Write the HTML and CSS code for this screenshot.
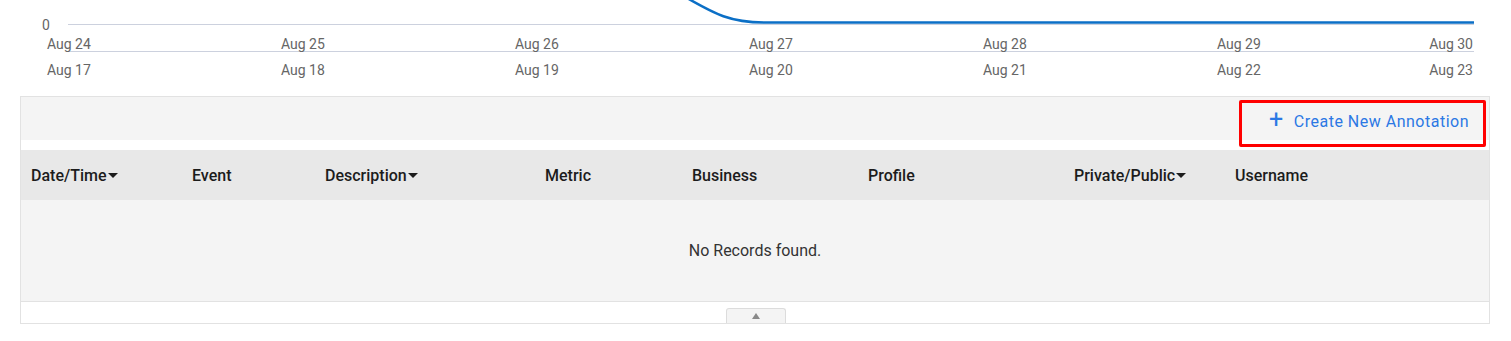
FILE: index.html
```html
<!DOCTYPE html>
<html>
<head>
<meta charset="utf-8">
<link rel="stylesheet" href="styles.css">
</head>
<body>
<div class="chart">
  <svg class="plot" width="1511" height="37" viewBox="0 0 1511 37">
    <text x="42" y="30" class="ylabel">0</text>
    <line x1="68" y1="24.5" x2="1474" y2="24.5" stroke="#ccd1de" stroke-width="1"/>
    <path d="M687 -2 C 715 14, 730 22.5, 765 22.5 L 1474 22.5" fill="none" stroke="#0b6fc6" stroke-width="2.5"/>
  </svg>
  <div class="axis axis-top">
    <span class="tick">Aug 24</span><span class="tick">Aug 25</span><span class="tick">Aug 26</span><span class="tick">Aug 27</span><span class="tick">Aug 28</span><span class="tick grow">Aug 29</span><span class="tick last">Aug 30</span>
  </div>
  <div class="axis-line"></div>
  <div class="axis axis-bottom">
    <span class="tick">Aug 17</span><span class="tick">Aug 18</span><span class="tick">Aug 19</span><span class="tick">Aug 20</span><span class="tick">Aug 21</span><span class="tick grow">Aug 22</span><span class="tick last">Aug 23</span>
  </div>
</div>

<div class="panel">
  <div class="toolbar">
    <button class="create-btn"><span class="plus">+</span>Create New Annotation</button>
  </div>
  <div class="spacer"></div>
  <div class="thead">
    <div class="th">Date/Time<span class="caret"></span></div>
    <div class="th">Event</div>
    <div class="th">Description<span class="caret"></span></div>
    <div class="th">Metric</div>
    <div class="th">Business</div>
    <div class="th">Profile</div>
    <div class="th">Private/Public<span class="caret"></span></div>
    <div class="th">Username</div>
  </div>
  <div class="tbody">No Records found.</div>
  <div class="tfoot">
    <div class="collapse-tab"><span class="up"></span></div>
  </div>
  <div class="highlight"></div>
</div>
</body>
</html>
```

FILE: styles.css
```css
html, body {
  margin: 0;
  padding: 0;
  background: #ffffff;
  font-family: Roboto, "Liberation Sans", sans-serif;
}

.chart {
  width: 1511px;
}

.plot {
  display: block;
}

.ylabel {
  font-family: Roboto, "Liberation Sans", sans-serif;
  font-size: 14px;
  fill: #666666;
}

.axis {
  display: flex;
  padding-left: 47px;
  width: 1426px;
  font-size: 14px;
  color: #666666;
}

.axis-top {
  height: 14px;
  line-height: 14px;
}

.axis-bottom {
  margin-top: 10px;
  height: 16px;
  line-height: 16px;
}

.tick {
  width: 234px;
  flex: 0 0 234px;
  white-space: nowrap;
}

.tick.grow {
  flex: 1 1 auto;
  width: auto;
}

.tick.last {
  flex: 0 0 auto;
  width: auto;
}

.axis-line {
  margin-left: 69px;
  width: 1405px;
  height: 1px;
  background: #ccd1de;
}

.panel {
  position: relative;
  margin: 18px 0 0 20px;
  width: 1470px;
  box-sizing: border-box;
  border: 1px solid #e2e2e2;
}

.toolbar {
  height: 43px;
  background: #f4f4f4;
  display: flex;
  justify-content: flex-end;
  align-items: center;
}

.create-btn {
  border: none;
  background: transparent;
  font-family: Roboto, "Liberation Sans", sans-serif;
  font-size: 16px;
  letter-spacing: 0.5px;
  color: #2b78e4;
  padding: 0;
  margin-right: 20px;
  margin-top: 6px;
  display: flex;
  align-items: center;
  cursor: pointer;
}

.plus {
  font-size: 25px;
  font-weight: 400;
  line-height: 18px;
  margin-right: 10px;
  position: relative;
  top: -2px;
}

.spacer {
  height: 10px;
  background: #ffffff;
}

.thead {
  display: grid;
  grid-template-columns: 161px 133px 220px 147px 176px 206px 161px 1fr;
  height: 50px;
  background: #e8e8e8;
  align-items: center;
}

.th {
  padding-left: 10px;
  font-size: 16px;
  font-weight: 500;
  color: #1c1c1c;
  white-space: nowrap;
  display: flex;
  align-items: center;
}

.caret {
  display: inline-block;
  width: 0;
  height: 0;
  border-left: 5px solid transparent;
  border-right: 5px solid transparent;
  border-top: 5px solid #1c1c1c;
  margin-left: 1px;
}

.tbody {
  height: 101px;
  background: #f4f4f4;
  border-bottom: 1px solid #e2e2e2;
  display: flex;
  align-items: center;
  justify-content: center;
  font-size: 16px;
  color: #333333;
}

.tfoot {
  height: 21px;
  display: flex;
  justify-content: center;
  align-items: flex-end;
}

.collapse-tab {
  width: 58px;
  height: 14px;
  margin-left: 2px;
  background: #f4f4f4;
  border: 1px solid #dcdcdc;
  border-bottom: none;
  border-radius: 3px 3px 0 0;
  display: flex;
  justify-content: center;
  align-items: center;
}

.up {
  width: 0;
  height: 0;
  border-left: 4px solid transparent;
  border-right: 4px solid transparent;
  border-bottom: 6px solid #8a8a8a;
}

.highlight {
  position: absolute;
  left: 1218px;
  top: 3px;
  width: 247px;
  height: 47px;
  box-sizing: border-box;
  border: 3px solid #ff0000;
  border-radius: 2px;
  pointer-events: none;
}
```
